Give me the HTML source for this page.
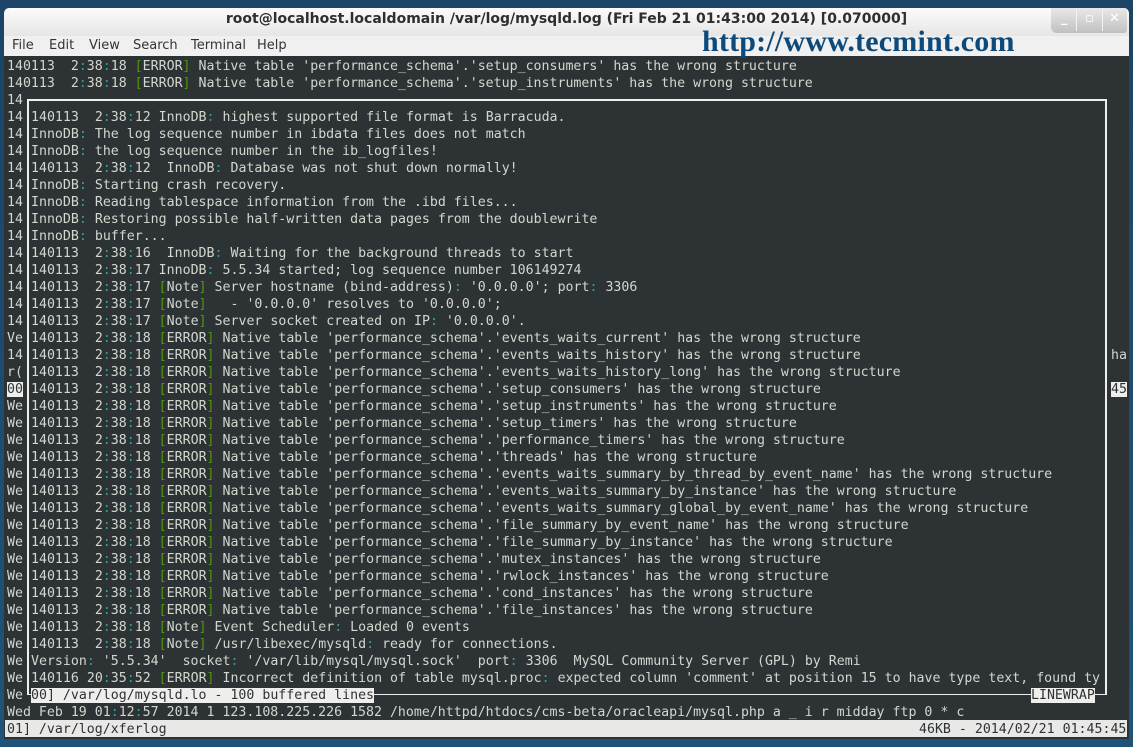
<!DOCTYPE html>
<html><head><meta charset="utf-8"><style>
body{margin:0;width:1133px;height:747px;overflow:hidden;background:linear-gradient(#1b4466,#1f5478);position:relative;font-family:"DejaVu Sans Mono",monospace}
#win{position:absolute;left:4px;top:8px;width:1125px;height:731px;background:#2d3234;border-radius:5px 5px 0 0;overflow:hidden}
#title{position:absolute;left:0;top:0;width:1125px;height:28px;background:linear-gradient(#fbfbfb,#e6e6e6);font:bold 14px "DejaVu Sans",sans-serif;color:#2e2e2e;text-align:center;line-height:23px}
#menu{position:absolute;left:0;top:28px;width:1125px;height:20px;background:#f0f0f0;font:13px "DejaVu Sans",sans-serif;color:#333}
#menu span{position:absolute;top:2px}
#btns{position:absolute;right:2px;top:0;width:76px;height:25px;background:linear-gradient(#e8e8e8,#c0c0c0);border-radius:0 0 3px 6px;color:#fff;font:bold 13px "DejaVu Sans",sans-serif}
#btns span{position:absolute;top:3px}
#btns i{position:absolute;top:2px;width:1px;height:21px;background:#f4f4f4}
#wm{position:absolute;left:702px;top:25px;font:bold 30px "Liberation Serif","DejaVu Serif",serif;color:#0d4a7a;letter-spacing:0.2px}
.r{position:absolute;font-size:13.25px;line-height:17px;height:17px;color:#d3d7cf;white-space:pre;top:0}
.c{color:#2fa39a}.g{color:#4e9a06}
.inv{background:#eeeeec;color:#2d3234}
#box{position:absolute;left:27px;top:99px;width:1076px;height:593px;border:2px solid #eeeeec;border-bottom-width:1px}
#bar{position:absolute;left:5px;top:720px;width:1122px;height:17px;background:#e8e8e6}
</style></head><body>
<div id="win">
<div id="title">root@localhost.localdomain /var/log/mysqld.log (Fri Feb 21 01:43:00 2014) [0.070000]</div>
<div id="btns"><span style="left:10px">_</span><i style="left:25px"></i><span style="left:34px">▫</span><i style="left:51px"></i><span style="left:58px">✕</span></div>
<div id="menu"><span style="left:8px">File</span><span style="left:45px">Edit</span><span style="left:85px">View</span><span style="left:129px">Search</span><span style="left:187px">Terminal</span><span style="left:253px">Help</span></div>
</div>
<div id="wm">http://www.tecmint.com</div>
<div id="box"></div>
<div id="bar"></div>
<div id="rows"></div>
<script>
var P="140113  2:38:18 [ERROR] Native table 'performance_schema'.'",S="' has the wrong structure";
var R=[
[null,P+"setup_consumers"+S],
[null,P+"setup_instruments"+S],
["14",""],
["14","140113  2:38:12 InnoDB: highest supported file format is Barracuda."],
["14","InnoDB: The log sequence number in ibdata files does not match"],
["14","InnoDB: the log sequence number in the ib_logfiles!"],
["14","140113  2:38:12  InnoDB: Database was not shut down normally!"],
["14","InnoDB: Starting crash recovery."],
["14","InnoDB: Reading tablespace information from the .ibd files..."],
["14","InnoDB: Restoring possible half-written data pages from the doublewrite"],
["14","InnoDB: buffer..."],
["14","140113  2:38:16  InnoDB: Waiting for the background threads to start"],
["14","140113  2:38:17 InnoDB: 5.5.34 started; log sequence number 106149274"],
["14","140113  2:38:17 [Note] Server hostname (bind-address): '0.0.0.0'; port: 3306"],
["14","140113  2:38:17 [Note]   - '0.0.0.0' resolves to '0.0.0.0';"],
["14","140113  2:38:17 [Note] Server socket created on IP: '0.0.0.0'."],
["Ve",P+"events_waits_current"+S],
["14",P+"events_waits_history"+S,"ha"],
["r(",P+"events_waits_history_long"+S],
["00",P+"setup_consumers"+S,"45"],
["We",P+"setup_instruments"+S],
["We",P+"setup_timers"+S],
["We",P+"performance_timers"+S],
["We",P+"threads"+S],
["We",P+"events_waits_summary_by_thread_by_event_name"+S],
["We",P+"events_waits_summary_by_instance"+S],
["We",P+"events_waits_summary_global_by_event_name"+S],
["We",P+"file_summary_by_event_name"+S],
["We",P+"file_summary_by_instance"+S],
["We",P+"mutex_instances"+S],
["We",P+"rwlock_instances"+S],
["We",P+"cond_instances"+S],
["We",P+"file_instances"+S],
["We","140113  2:38:18 [Note] Event Scheduler: Loaded 0 events"],
["We","140113  2:38:18 [Note] /usr/libexec/mysqld: ready for connections."],
["We","Version: '5.5.34'  socket: '/var/lib/mysql/mysql.sock'  port: 3306  MySQL Community Server (GPL) by Remi"],
["We","140116 20:35:52 [ERROR] Incorrect definition of table mysql.proc: expected column 'comment' at position 15 to have type text, found ty"]
];
function esc(s){return s.replace(/&/g,"&amp;").replace(/</g,"&lt;")}
function col(s){return esc(s).replace(/:/g,'<span class="c">:</span>').replace(/([\[\]])/g,'<span class="g">$1</span>')}
var h="";
function add(x,y,html){h+='<div class="r" style="left:'+x+'px;top:'+(y+1)+'px">'+html+'</div>';}
for(var i=0;i<R.length;i++){var y=57+17*i,r=R[i];
 if(r[0]===null){add(7,y,col(r[1]));continue;}
 add(7,y,i==19?'<span class="inv">00</span>':esc(r[0]));
 if(r[1])add(31,y,col(r[1]));
 if(r[2])add(1111,y,i==19?'<span class="inv">45</span>':r[2]);
}
add(7,686,"We");
add(31,686,'<span class="inv">00] /var/log/mysqld.lo - 100 buffered lines</span>');
add(1031,686,'<span class="inv">LINEWRAP</span>');
add(7,703,col("Wed Feb 19 01:12:57 2014 1 123.108.225.226 1582 /home/httpd/htdocs/cms-beta/oracleapi/mysql.php a _ i r midday ftp 0 * c"));
add(7,720,'<span style="color:#2d3234">01] /var/log/xferlog</span>');
add(919,720,'<span style="color:#2d3234">46KB - 2014/02/21 01:45:45</span>');
document.getElementById("rows").innerHTML=h;
</script>
</body></html>
